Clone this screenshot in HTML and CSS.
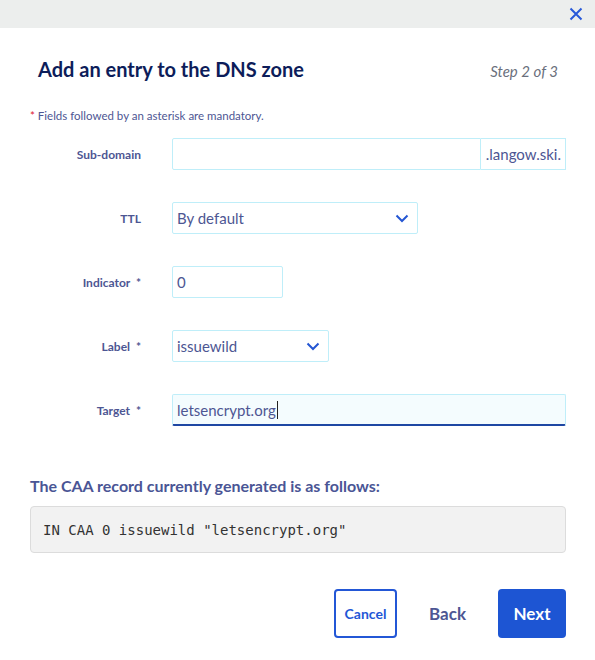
FILE: index.html
```html
<!DOCTYPE html>
<html lang="en">
<head>
<meta charset="utf-8">
<title>Add an entry to the DNS zone</title>
<link rel="stylesheet" href="styles.css">
</head>
<body>
<div class="topbar">
  <button class="close" aria-label="Close">
    <svg width="14" height="14" viewBox="0 0 14 14"><path d="M1.5 1.5 L12.5 12.5 M12.5 1.5 L1.5 12.5" stroke="#2859d9" stroke-width="2" fill="none"/></svg>
  </button>
</div>
<div class="modal">
  <div class="header">
    <h1 class="title">Add an entry to the DNS zone</h1>
    <span class="step">Step 2 of 3</span>
  </div>
  <p class="note"><span class="req">*</span> Fields followed by an asterisk are mandatory.</p>
  <div class="form">
    <label class="lbl">Sub-domain</label>
    <div class="field">
      <div class="group">
        <div class="input grow"></div>
        <div class="suffix">.langow.ski.</div>
      </div>
    </div>

    <label class="lbl">TTL</label>
    <div class="field">
      <div class="input select w-ttl">By default
        <svg class="chev" width="14" height="9" viewBox="0 0 14 9"><path d="M1.5 1.5 L7 7 L12.5 1.5" stroke="#2456d3" stroke-width="2" fill="none"/></svg>
      </div>
    </div>

    <label class="lbl">Indicator &nbsp;*</label>
    <div class="field">
      <div class="input w-ind">0</div>
    </div>

    <label class="lbl">Label &nbsp;*</label>
    <div class="field">
      <div class="input select w-label">issuewild
        <svg class="chev" width="14" height="9" viewBox="0 0 14 9"><path d="M1.5 1.5 L7 7 L12.5 1.5" stroke="#2456d3" stroke-width="2" fill="none"/></svg>
      </div>
    </div>

    <label class="lbl">Target &nbsp;*</label>
    <div class="field">
      <div class="input active">letsencrypt.org<span class="caret"></span></div>
    </div>
  </div>

  <h2 class="subtitle">The CAA record currently generated is as follows:</h2>
  <div class="code">IN CAA 0 issuewild "letsencrypt.org"</div>

  <div class="actions">
    <button class="btn btn-outline">Cancel</button>
    <button class="btn btn-text">Back</button>
    <button class="btn btn-primary">Next</button>
  </div>
</div>
</body>
</html>
```

FILE: styles.css
```css
* { box-sizing: border-box; }
html, body { margin: 0; padding: 0; background: #fff; }
body {
  font-family: Lato, "Open Sans", "Liberation Sans", sans-serif;
  color: #4d5693;
  width: 595px;
}
.topbar {
  height: 28px;
  background: #eceeed;
  display: flex;
  justify-content: flex-end;
  align-items: center;
}
.close {
  border: 0;
  background: transparent;
  padding: 0;
  margin-right: 12px;
  width: 14px;
  height: 14px;
  display: flex;
}
.modal {
  padding: 0 29px 0 30px;
}
.header {
  display: flex;
  justify-content: space-between;
  align-items: baseline;
  padding: 28px 8px 0 8px;
}
.title {
  margin: 0;
  font-size: 20px;
  line-height: 26px;
  font-weight: 700;
  color: #0d1d5a;
}
.step {
  font-size: 15px;
  font-style: italic;
  color: #6a6f7c;
}
.note {
  margin: 27px 0 0 0;
  font-size: 11.5px;
  line-height: 14px;
  color: #4d5693;
}
.req { color: #e0182d; }
.form {
  margin-top: 15px;
  display: grid;
  grid-template-columns: 111px 1fr;
  column-gap: 31px;
  row-gap: 32px;
  align-items: center;
}
.lbl {
  text-align: right;
  font-size: 12px;
  font-weight: 700;
  color: #4d5693;
}
.field { display: flex; }
.group { display: flex; flex: 1; }
.input {
  height: 32px;
  border: 1px solid #bfeef9;
  border-radius: 2px;
  display: flex;
  align-items: center;
  padding: 0 4px;
  font-size: 15px;
  color: #4d5693;
  background: #fff;
}
.grow { flex: 1; border-radius: 2px 0 0 2px; }
.suffix {
  height: 32px;
  border: 1px solid #bfeef9;
  border-left: 0;
  display: flex;
  align-items: center;
  padding: 0 4px 0 5px;
  font-size: 15px;
  color: #4d5693;
}
.select { justify-content: space-between; padding-right: 8px; }
.w-ttl { width: 246px; }
.w-ind { width: 111px; }
.w-label { width: 157px; }
.active {
  flex: 1;
  background: #f4fcfe;
  border-bottom: 2px solid #1e47a3;
  padding-top: 1px;
}
.caret {
  display: inline-block;
  width: 1px;
  height: 18px;
  background: #222;
  margin-left: 1px;
}
.chev { flex: none; }
.subtitle {
  margin: 50px 0 0 0;
  font-size: 16px;
  line-height: 20px;
  font-weight: 700;
  color: #4a5595;
}
.code {
  margin-top: 10px;
  height: 47px;
  background: #f2f2f2;
  border: 1px solid #dcdcdc;
  border-radius: 4px;
  display: flex;
  align-items: center;
  padding: 0 12px;
  font-family: "DejaVu Sans Mono", "Liberation Mono", monospace;
  font-size: 14px;
  color: #333;
}
.actions {
  margin-top: 36px;
  display: flex;
  justify-content: flex-end;
  gap: 16px;
}
.btn {
  height: 49px;
  border-radius: 4px;
  font-family: inherit;
  font-weight: 700;
  cursor: pointer;
}
.btn-outline {
  width: 63px;
  padding: 0;
  border: 2px solid #2357d6;
  background: #fff;
  color: #2357d6;
  font-size: 14px;
}
.btn-text {
  border: 0;
  background: transparent;
  padding: 0 16px;
  color: #4d5693;
  font-size: 17px;
}
.btn-primary {
  width: 68px;
  padding: 0;
  border: 0;
  background: #1d55d3;
  color: #fff;
  font-size: 17px;
}
```
